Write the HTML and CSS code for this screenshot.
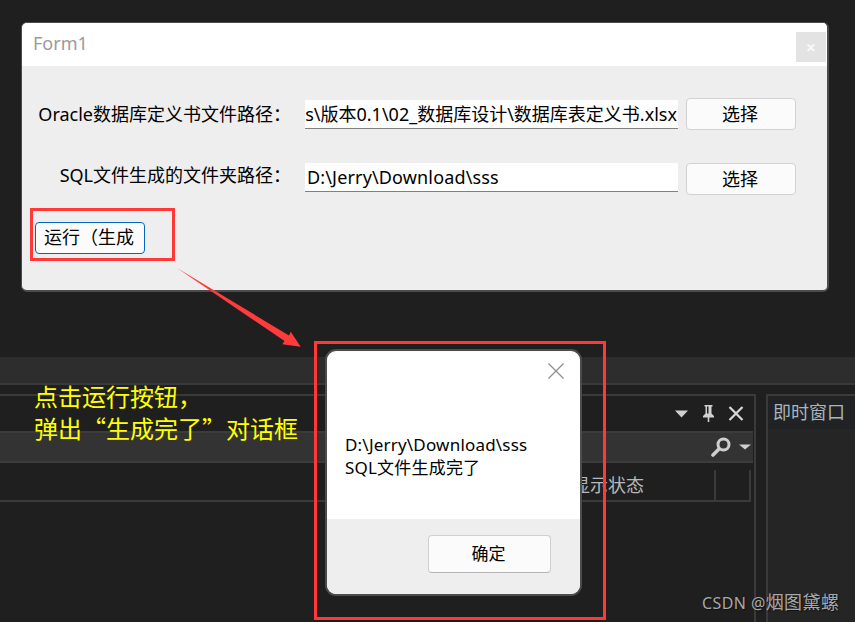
FILE: index.html
```html
<!DOCTYPE html>
<html lang="zh-CN">
<head>
    <meta charset="UTF-8">
    <title>Form1</title>
    <link rel="stylesheet" href="styles.css">
</head>
<body>

<div class="desk">

    <div class="ide">
        <div class="ide-tabs"></div>
        <div class="ide-panels">
            <div class="panel-main">
                <div class="panel-head">
                    <svg class="tool-down" width="13" height="8" viewBox="0 0 13 8"><path d="M0 .5h13L6.500 7.500z" fill="#d0d0d0"/></svg>
                    <svg class="tool-pin" width="11" height="17" viewBox="0 0 11 17"><path d="M1.500 0h8v1.500H8.500v7L11 11v1.500H6.300V17H4.700v-4.500H0V11l2.500-2.500v-7h-1zM4 1.500v7h1.500v-7z" fill="#d0d0d0"/></svg>
                    <svg class="tool-close" width="16" height="15" viewBox="0 0 16 15"><path d="M1.500 1l13 13M14.500 1l-13 13" stroke="#d8d8d8" stroke-width="2.200" fill="none"/></svg>
                </div>
                <div class="panel-search">
                    <svg width="20" height="20" viewBox="0 0 20 20"><circle cx="12.500" cy="7.500" r="5.500" fill="none" stroke="#cfcfcf" stroke-width="3"/><path d="M8 12L2 18" stroke="#cfcfcf" stroke-width="3.600" stroke-linecap="round"/></svg>
                    <svg width="12" height="6" viewBox="0 0 12 6"><path d="M0 .5h12L6 5.500z" fill="#cfcfcf"/></svg>
                </div>
                <div class="panel-cols">
                    <div class="col col-state">显示状态</div>
                    <div class="col col-last"></div>
                </div>
            </div>
            <div class="panel-side">
                <div class="side-title">即时窗口</div>
            </div>
        </div>
    </div>

    <div class="form-win">
        <div class="form-title">
            <span>Form1</span>
            <div class="form-close">×</div>
        </div>
        <div class="form-body">
            <div class="form-row">
                <div class="form-label">Oracle数据库定义书文件路径：</div>
                <div class="path-box path-end"><span>s\版本0.1\02_数据库设计\数据库表定义书.xlsx</span></div>
                <div class="btn">选择</div>
            </div>
            <div class="form-row">
                <div class="form-label form-label-short">SQL文件生成的文件夹路径：</div>
                <div class="path-box"><span>D:\Jerry\Download\sss</span></div>
                <div class="btn">选择</div>
            </div>
            <div class="btn btn-run">运行（生成</div>
        </div>
    </div>

    <div class="note">点击运行按钮，<br>弹出“生成完了”对话框</div>

    <div class="msg-win">
        <div class="msg-top">
            <svg class="msg-close" width="16" height="16" viewBox="0 0 16 16"><path d="M.5.5l15 15M15.500.5l-15 15" stroke="#8c8c8c" stroke-width="1.200" fill="none"/></svg>
            <p class="msg-text">D:\Jerry\Download\sss<br>SQL文件生成完了</p>
        </div>
        <div class="msg-foot">
            <div class="btn btn-ok">确定</div>
        </div>
    </div>

    <div class="mark mark-run"></div>
    <div class="mark mark-msg"></div>
    <svg class="arrow" width="124" height="79" viewBox="0 0 124 79">
        <path d="M0 0L112 67.500L113.700 63.700L123.700 78.700L105.300 76.300L107.500 73Z" fill="#ff3b3b"/>
    </svg>

    <div class="watermark">CSDN @<span class="watermark-name">烟图黛螺</span></div>
</div>

</body>
</html>
```

FILE: styles.css
```css
html, body {
    margin: 0;
    padding: 0;
}

body {
    width: 855px;
    height: 622px;
    overflow: hidden;
    background: #1f1f1f;
    font-family: "Noto Sans", "Noto Sans CJK SC", sans-serif;
    color: black;
}

.desk {
    position: relative;
    width: 855px;
    height: 622px;
    overflow: hidden;
}

/* dark editor behind the windows */
.ide {
    display: flex;
    flex-direction: column;
    height: 100%;
    padding-top: 357px;
    box-sizing: border-box;
}

.ide-tabs {
    height: 26px;
    background: #2d2d2d;
    border-bottom: 2px solid #3a3a3a;
}

.ide-panels {
    display: flex;
    flex: 1;
    margin-top: 9px;
    gap: 10px;
}

.panel-main {
    width: 756px;
    box-sizing: border-box;
    border-top: 2px solid #3a3a3a;
    border-right: 2px solid #3a3a3a;
}

.panel-head {
    height: 35px;
    display: flex;
    align-items: center;
    justify-content: flex-end;
    padding-right: 10px;
}

.tool-down {
    margin-right: 15px;
}

.tool-pin {
    margin-right: 14px;
}

.panel-search {
    height: 28px;
    margin-right: 1px;
    background: #333333;
    border-top: 2px solid #3c3c3c;
    border-bottom: 2px solid #3c3c3c;
    display: flex;
    align-items: center;
    justify-content: flex-end;
    gap: 8px;
    padding-right: 2px;
}

.panel-cols {
    height: 30px;
    margin-top: 7px;
    margin-right: 3px;
    display: flex;
    justify-content: flex-end;
    border-bottom: 2px solid #3a3a3a;
    color: #b8b8b8;
    font-size: 18px;
}

.col {
    box-sizing: border-box;
    height: 30px;
    border-right: 2px solid #3a3a3a;
}

.col-state {
    width: 144px;
    line-height: 30px;
}

.col-last {
    width: 35px;
}

.panel-side {
    flex: 1;
    background: #252526;
    border-top: 2px solid #3a3a3a;
    border-left: 2px solid #3a3a3a;
}

.side-title {
    height: 33px;
    line-height: 33px;
    padding-left: 5px;
    background: #202223;
    color: #a9b4bd;
    font-size: 18px;
}

/* Form1 */
.form-win {
    position: absolute;
    left: 21px;
    top: 22px;
    width: 808px;
    height: 270px;
    box-sizing: border-box;
    border-style: solid;
    border-color: #4c4c4c;
    border-width: 1px 2px 2px 1px;
    border-radius: 6px;
    overflow: hidden;
    display: flex;
    flex-direction: column;
    background: #eeeeee;
}

.form-title {
    height: 43px;
    flex: none;
    background: white;
    display: flex;
    justify-content: space-between;
    padding-left: 11px;
    color: #9a9a9a;
    font-size: 18px;
    line-height: 41px;
}

.form-close {
    width: 30px;
    height: 30px;
    margin-top: 9px;
    margin-right: 1px;
    background: #e3e3e3;
    color: #f8f8f8;
    text-align: center;
    font-size: 18px;
    font-weight: bold;
    line-height: 30px;
}

.form-body {
    flex: 1;
    padding: 32px 0 0 13px;
}

.form-row {
    display: flex;
    align-items: flex-start;
    height: 32px;
    margin-bottom: 33px;
}

.form-label {
    width: 256px;
    flex: none;
    text-align: right;
    font-size: 18px;
    line-height: 32px;
    white-space: nowrap;
    margin-right: 14px;
}

.form-label-short {
    line-height: 25px;
}

.path-box {
    width: 373px;
    height: 29px;
    flex: none;
    box-sizing: border-box;
    background: white;
    border-bottom: 1px solid #808080;
    display: flex;
    overflow: hidden;
    padding-left: 2px;
    font-size: 18px;
    letter-spacing: 0.15px;
    line-height: 28px;
    white-space: nowrap;
}

.path-end {
    justify-content: flex-end;
    margin-top: 2px;
    padding-left: 0;
    padding-right: 1px;
    letter-spacing: 0;
}

.btn {
    box-sizing: border-box;
    width: 110px;
    height: 32px;
    margin-left: 8px;
    flex: none;
    background: #fbfbfb;
    border: 1px solid #d2d2d2;
    border-radius: 4px;
    padding-right: 2px;
    text-align: center;
    font-size: 18px;
    line-height: 30px;
}

.btn-run {
    margin: -6px 0 0 0;
    text-align: left;
    padding-left: 8px;
    line-height: 28px;
    border-color: #0067c0;
}

/* message box */
.msg-win {
    position: absolute;
    left: 325px;
    top: 349px;
    width: 257px;
    height: 247px;
    box-sizing: border-box;
    border: 2px solid #4c4c4c;
    border-radius: 11px;
    overflow: hidden;
    display: flex;
    flex-direction: column;
    background: white;
}

.msg-top {
    position: relative;
    height: 168px;
    flex: none;
}

.msg-close {
    position: absolute;
    right: 16px;
    top: 12px;
}

.msg-text {
    margin: 0;
    padding: 82px 0 0 18px;
    font-size: 17px;
    letter-spacing: 0.2px;
    line-height: 23px;
    white-space: nowrap;
}

.msg-foot {
    flex: 1;
    background: #eeeeee;
    display: flex;
    justify-content: flex-end;
    padding: 16px 29px 0 0;
}

.btn-ok {
    width: 123px;
    height: 38px;
    margin: 0;
    font-size: 17px;
    line-height: 36px;
    border-color: #cfcfcf;
    border-bottom-color: #b5b5b5;
}

/* annotations */
.note {
    position: absolute;
    left: 34px;
    top: 380px;
    color: #ffff00;
    font-family: "Noto Sans CJK SC", sans-serif;
    font-size: 24px;
    line-height: 32px;
    white-space: nowrap;
}

.mark {
    position: absolute;
    box-sizing: border-box;
    border: 3px solid #ff3838;
}

.mark-run {
    left: 30px;
    top: 208px;
    width: 145px;
    height: 53px;
}

.mark-msg {
    left: 314px;
    top: 341px;
    width: 292px;
    height: 279px;
}

.arrow {
    position: absolute;
    left: 177px;
    top: 268px;
    overflow: visible;
}

.watermark {
    position: absolute;
    left: 702px;
    top: 591px;
    color: #a8a8a8;
    font-size: 16px;
    letter-spacing: 0.4px;
    line-height: 22px;
    text-shadow: 1px 1px 1px #111;
    white-space: nowrap;
}

.watermark-name {
    font-size: 18px;
}
```
